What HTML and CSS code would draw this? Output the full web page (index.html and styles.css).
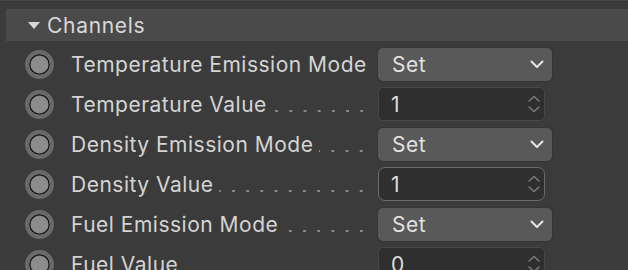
FILE: index.html
```html
<!DOCTYPE html>
<html lang="en">
<head>
    <meta charset="UTF-8">
    <meta name="viewport" content="width=device-width, initial-scale=1.0">
    <title>Channels</title>
    <link rel="stylesheet" href="styles.css">
</head>
<body>

<div class="panel">
    <div class="group-head">
        <span class="caret"></span>
        <span class="group-title">Channels</span>
    </div>

    <div class="rows">
        <div class="row">
            <span class="port"></span>
            <span class="label"><span class="name">Temperature Emission Mode</span><span class="leader"></span></span>
            <div class="select"><span>Set</span>
                <svg class="chev" width="14" height="9" viewBox="0 0 14 9"><path d="M1.5 1.5 L7 7 L12.5 1.5" fill="none" stroke="#e6e6e6" stroke-width="2" stroke-linecap="round" stroke-linejoin="round"/></svg>
            </div>
        </div>
        <div class="row">
            <span class="port"></span>
            <span class="label"><span class="name">Temperature Value</span><span class="leader"></span></span>
            <div class="number"><span>1</span>
                <svg class="spin" width="14" height="20" viewBox="0 0 14 20"><path d="M2 7 L7 2.5 L12 7 M2 13 L7 17.5 L12 13" fill="none" stroke="#7c7c7c" stroke-width="1.5" stroke-linecap="round" stroke-linejoin="round"/></svg>
            </div>
        </div>
        <div class="row">
            <span class="port"></span>
            <span class="label"><span class="name">Density Emission Mode</span><span class="leader"></span></span>
            <div class="select"><span>Set</span>
                <svg class="chev" width="14" height="9" viewBox="0 0 14 9"><path d="M1.5 1.5 L7 7 L12.5 1.5" fill="none" stroke="#e6e6e6" stroke-width="2" stroke-linecap="round" stroke-linejoin="round"/></svg>
            </div>
        </div>
        <div class="row">
            <span class="port"></span>
            <span class="label"><span class="name">Density Value</span><span class="leader"></span></span>
            <div class="number active"><span>1</span>
                <svg class="spin" width="14" height="20" viewBox="0 0 14 20"><path d="M2 7 L7 2.5 L12 7 M2 13 L7 17.5 L12 13" fill="none" stroke="#7c7c7c" stroke-width="1.5" stroke-linecap="round" stroke-linejoin="round"/></svg>
            </div>
        </div>
        <div class="row">
            <span class="port"></span>
            <span class="label"><span class="name">Fuel Emission Mode</span><span class="leader"></span></span>
            <div class="select"><span>Set</span>
                <svg class="chev" width="14" height="9" viewBox="0 0 14 9"><path d="M1.5 1.5 L7 7 L12.5 1.5" fill="none" stroke="#e6e6e6" stroke-width="2" stroke-linecap="round" stroke-linejoin="round"/></svg>
            </div>
        </div>
        <div class="row">
            <span class="port"></span>
            <span class="label"><span class="name">Fuel Value</span><span class="leader"></span></span>
            <div class="number"><span>0</span>
                <svg class="spin" width="14" height="20" viewBox="0 0 14 20"><path d="M2 7 L7 2.5 L12 7 M2 13 L7 17.5 L12 13" fill="none" stroke="#7c7c7c" stroke-width="1.5" stroke-linecap="round" stroke-linejoin="round"/></svg>
            </div>
        </div>
    </div>
</div>

</body>
</html>
```

FILE: styles.css
```css
html, body {
    margin: 0;
    height: 100%;
    overflow: hidden;
}
body {
    font-family: Inter, "Liberation Sans", sans-serif;
    background-color: #3b3b3b;
    color: #d4d4d4;
    border-top: 1px solid #474747;
}
.panel {
    padding-top: 7px;
    padding-left: 6px;
    border-top: 1px solid #333;
}
.group-head {
    display: flex;
    align-items: center;
    height: 32px;
    background: #4a4a4a;
    padding-left: 22px;
}
.caret {
    width: 0;
    height: 0;
    border-left: 6px solid transparent;
    border-right: 6px solid transparent;
    border-top: 7px solid #d8d8d8;
    margin-right: 7px;
    margin-top: 1px;
}
.group-title {
    font-size: 21px;
    letter-spacing: 0.7px;
    color: #d8d8d8;
}
.rows {
    padding-top: 3px;
}
.row {
    display: flex;
    align-items: center;
    height: 40px;
}
.port {
    box-sizing: border-box;
    width: 29px;
    height: 29px;
    margin-left: 19px;
    border-radius: 50%;
    background: #8c8c8c;
    border: 4px solid #6a6a6a;
    box-shadow: inset 0 0 0 1.5px #1c1c1c;
    flex: none;
}
.label {
    display: flex;
    align-items: baseline;
    width: 292px;
    margin-left: 17px;
    margin-right: 15px;
    font-size: 21px;
    letter-spacing: 0.5px;
    white-space: nowrap;
}
.leader {
    flex: 1;
    height: 2px;
    margin-left: 6px;
    background: linear-gradient(to right, transparent calc(100% - 3px), #8a8a8a 0) right bottom / 14.2px 1.5px repeat-x;
}
.select {
    display: flex;
    align-items: center;
    justify-content: space-between;
    box-sizing: border-box;
    width: 174px;
    height: 33px;
    padding: 0 8px 0 14px;
    background: #595959;
    border-radius: 5px;
    box-shadow: 0 0 0 1px #353535;
    font-size: 21px;
    letter-spacing: 0.5px;
    color: #e2e2e2;
}
.number {
    display: flex;
    align-items: center;
    justify-content: space-between;
    box-sizing: border-box;
    width: 167px;
    height: 34px;
    padding: 0 3px 0 12px;
    background: #2f2f2f;
    border: 1px solid #474747;
    border-radius: 5px;
    font-size: 21px;
    color: #dcdcdc;
}
.number.active {
    border: 1.5px solid #6b6b6b;
    border-radius: 7px;
}
```
